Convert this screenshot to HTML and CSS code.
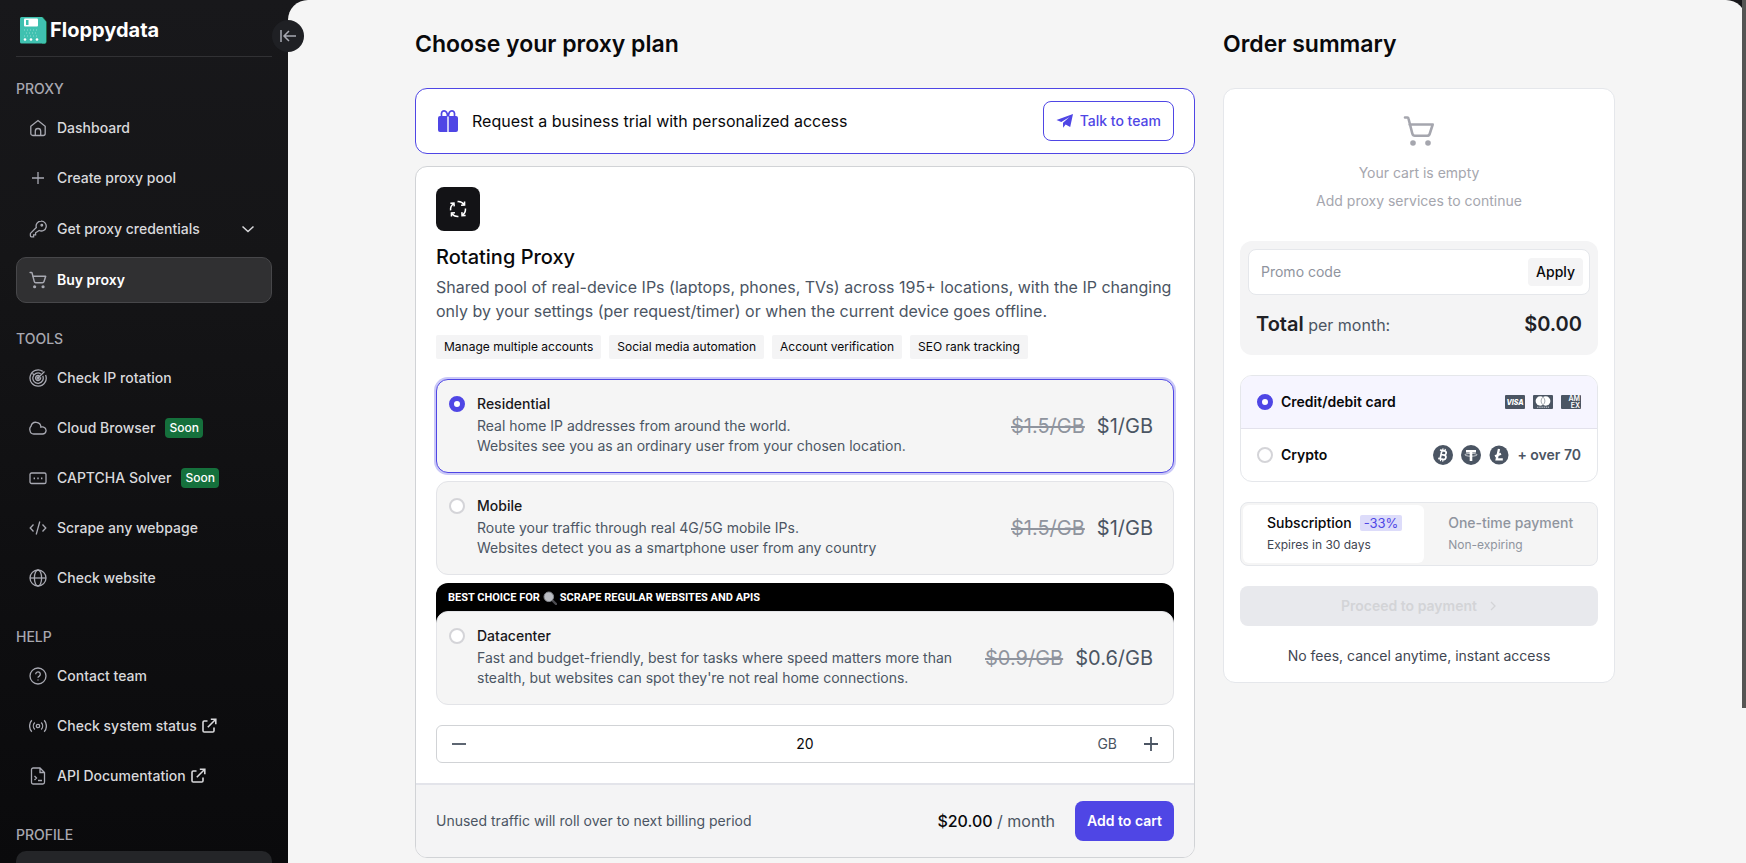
FILE: index.html
```html
<!DOCTYPE html>
<html lang="en">
<head>
  <meta charset="UTF-8" />
  <meta name="viewport" content="width=device-width, initial-scale=1.0" />
  <title>Floppydata - Buy proxy</title>
  <link rel="stylesheet" href="styles.css">
</head>
<body>
  <svg class="sprite" width="0" height="0" aria-hidden="true">
    <symbol id="i-cart" viewBox="0 0 32 32">
      <path d="M2 2.500h2.400c.6 0 .9.3 1 .8L9.300 18.500c.4 1.500 1 2.300 2.600 2.300H24c1.500 0 2.300-.6 2.700-2l3-9.300H6.600" fill="none" stroke="currentColor" stroke-width="2.600" stroke-linejoin="round" stroke-linecap="round"/>
      <circle cx="10" cy="28" r="2.800" fill="currentColor"/><circle cx="25" cy="28" r="2.800" fill="currentColor"/>
    </symbol>
    <symbol id="i-ext" viewBox="0 0 16 16">
      <path d="M6.500 3H3.300C2.600 3 2 3.600 2 4.300v8.400c0 .7.6 1.300 1.300 1.300h8.400c.7 0 1.300-.6 1.300-1.300V9.500M9.800 1.200h5v5M14.500 1.500 6.800 9.200" fill="none" stroke="currentColor" stroke-width="1.600"/>
    </symbol>
  </svg>

  <div class="app">
    <aside class="sidebar">
      <div class="brand">
        <svg class="brand-logo" width="27" height="27" viewBox="0 0 27 27">
          <path d="M22 0h1l4 5v20l-2 2h-3z" fill="#1d6b45"/>
          <path d="M1.500 0H22l4 4.500V25a1.500 1.500 0 0 1-1.500 1.500h-23A1.500 1.500 0 0 1 0 25V1.500A1.500 1.500 0 0 1 1.500 0z" fill="#3fc1b0"/>
          <rect x="4" y="1.500" width="14" height="8" rx="1" fill="#fff"/>
          <rect x="6" y="3" width="2.500" height="5" fill="#3fc1b0"/>
          <path d="M4 13h14M6 16h12M4 19h14" stroke="#8edbd0" stroke-width="1" stroke-dasharray="1 2"/>
          <circle cx="5" cy="22.500" r="1.300" fill="#fff"/><circle cx="11" cy="22.500" r="1.300" fill="#fff"/><circle cx="17" cy="22.500" r="1.300" fill="#fff"/>
        </svg>
        <span>Floppydata</span>
      </div>

      <nav class="nav">
        <section class="nav-group">
          <h3>PROXY</h3>
          <a class="nav-item" href="#">
            <svg class="ic" viewBox="0 0 18 18"><path d="M1.800 7.200 9 1.500l7.200 5.700v7.300a2 2 0 0 1-2 2H3.800a2 2 0 0 1-2-2zM6.300 16.500v-4.300a2.700 2.700 0 0 1 5.400 0v4.300"/></svg>
            Dashboard
          </a>
          <a class="nav-item" href="#">
            <svg class="ic" viewBox="0 0 18 18"><path d="M9 3v12M3 9h12"/></svg>
            Create proxy pool
          </a>
          <button class="nav-item nav-item-menu" type="button">
            <svg class="ic" viewBox="0 0 18 18"><path d="M12 1.200a4.900 4.900 0 0 0-4.700 6.300L1.700 13.100a1 1 0 0 0-.3.700v2c0 .6.400 1 1 1h2.200v-2h2v-2l3.600-2.300A4.900 4.900 0 1 0 12 1.200z"/><circle cx="12.800" cy="5.300" r=".8"/></svg>
            <span>Get proxy credentials</span>
            <svg class="chev" viewBox="0 0 14 14"><path d="m1.500 4.500 5.500 5 5.500-5"/></svg>
          </button>
          <a class="nav-item active" href="#">
            <svg class="ic ic-cart"><use href="#i-cart"/></svg>
            Buy proxy
          </a>
        </section>

        <section class="nav-group">
          <h3>TOOLS</h3>
          <a class="nav-item" href="#">
            <svg class="ic" viewBox="0 0 18 18"><path d="M13.700 2.400A8.100 8.100 0 1 0 16.600 6M3.500 4.500l1.200 1M11.700 4.700a5.200 5.200 0 1 0 2 2.200M10.300 6.800a2.500 2.500 0 1 0 1.200 1.500M9 9l6.500-6.500"/><circle cx="9" cy="9" r="1"/></svg>
            Check IP rotation
          </a>
          <a class="nav-item" href="#">
            <svg class="ic" viewBox="0 0 18 18"><path d="M4.800 15h8.700a3.500 3.500 0 0 0 1.200-6.800c-.8-.4-2-.4-2.800-.1A5 5 0 0 0 2 7.300 4.200 4.200 0 0 0 1 11.500 3.900 3.900 0 0 0 4.800 15z"/></svg>
            Cloud Browser <span class="soon">Soon</span>
          </a>
          <a class="nav-item" href="#">
            <svg class="ic" viewBox="0 0 18 18"><rect x="1" y="4" width="16" height="10.500" rx="1.600"/><path d="M4.600 9.300h1.400M8.300 9.300h1.400M12 9.300h1.400" stroke-width="1.800"/></svg>
            CAPTCHA Solver <span class="soon">Soon</span>
          </a>
          <a class="nav-item" href="#">
            <svg class="ic" viewBox="0 0 18 18"><path d="M4.500 5.500 1.200 9l3.300 3.500M13.500 5.500 16.800 9l-3.300 3.500M10.800 2.500l-3.600 13"/></svg>
            Scrape any webpage
          </a>
          <a class="nav-item" href="#">
            <svg class="ic" viewBox="0 0 18 18"><circle cx="9" cy="9" r="8"/><ellipse cx="9" cy="9" rx="3.600" ry="8"/><path d="M1 9h16"/></svg>
            Check website
          </a>
        </section>

        <section class="nav-group">
          <h3>HELP</h3>
          <a class="nav-item" href="#">
            <svg class="ic" viewBox="0 0 18 18"><circle cx="9" cy="9" r="8"/><path d="M6.700 7.200a2.300 2.300 0 1 1 3.600 1.900C9.500 9.600 9 10 9 10.800M9 12.600v1"/></svg>
            Contact team
          </a>
          <a class="nav-item" href="#">
            <svg class="ic" viewBox="0 0 18 18"><circle cx="9" cy="9" r="1.700"/><path d="M5.800 5.500a5 5 0 0 0 0 7M12.200 5.500a5 5 0 0 1 0 7M2.800 3.300a8.500 8.500 0 0 0 0 11.400M15.200 3.300a8.500 8.500 0 0 1 0 11.400"/></svg>
            <span class="ext">Check system status <svg class="ext-ic"><use href="#i-ext"/></svg></span>
          </a>
          <a class="nav-item" href="#">
            <svg class="ic" viewBox="0 0 18 18"><path d="M11 1H4.200a1.700 1.700 0 0 0-1.700 1.700v12.600A1.700 1.700 0 0 0 4.200 17h9.600a1.700 1.700 0 0 0 1.700-1.700V5.500zM11 1v4.500h4.500M5.500 9l2 2-2 2M9 13.500h4"/></svg>
            <span class="ext">API Documentation <svg class="ext-ic"><use href="#i-ext"/></svg></span>
          </a>
        </section>

        <section class="nav-group">
          <h3>PROFILE</h3>
          <div class="profile-card"></div>
        </section>
      </nav>
    </aside>

    <main class="main">
      <button class="collapse" type="button" aria-label="Collapse sidebar">
        <svg width="18" height="14" viewBox="0 0 18 14"><path d="M2 1v12M17 7H5M10 2 5 7l5 5" fill="none" stroke="currentColor" stroke-width="1.500"/></svg>
      </button>
      <div class="scroll-thumb"></div>

      <div class="content">
        <div class="plans">
          <h1>Choose your proxy plan</h1>

          <div class="trial">
            <svg width="24" height="24" viewBox="0 0 24 24" fill="#4f46e5">
              <path d="M4 7h7.300v16H4a2 2 0 0 1-2-2V9a2 2 0 0 1 2-2zM12.700 7H20a2 2 0 0 1 2 2v12a2 2 0 0 1-2 2h-7.300z"/>
              <path d="M11.500 7.500C11.500 3.500 10 1.800 8 1.800S5 3.500 5.600 7M12.500 7.500c0-4 1.500-5.700 3.500-5.700s3 1.700 2.400 5.200" fill="none" stroke="#4f46e5" stroke-width="1.700"/>
            </svg>
            <p>Request a business trial with personalized access</p>
            <button class="btn-outline" type="button">
              <svg width="18" height="16" viewBox="0 0 18 16" fill="currentColor"><path d="M17 1 .5 7l4.800 1.900L13.500 4 7 9.800l.1 5 2.500-3.200 4.600 2.400z"/></svg>
              Talk to team
            </button>
          </div>

          <div class="plan">
            <div class="plan-body">
              <div class="plan-icon">
                <svg width="18" height="18" viewBox="0 0 20 20" fill="none" stroke="#fff" stroke-width="1.700">
                  <path d="M1.800 11.500c-.4-3 .7-5.800 3.500-7.500M1.500 3.500l4-.2.300 3.800M9.500 1.800c3-.2 5.700 1 7.300 3.500M17.300 1.600v4l-3.900.3M18.300 9.500c.2 3-1 5.800-3.500 7.400M18.500 17.300l-4 .1-.2-3.900M10.500 18.300c-3 .2-5.800-1-7.400-3.500M2.700 18.400v-4l3.900-.2"/>
                </svg>
              </div>
              <h2>Rotating Proxy</h2>
              <p class="plan-desc">Shared pool of real-device IPs (laptops, phones, TVs) across 195+ locations, with the IP changing only by your settings (per request/timer) or when the current device goes offline.</p>
              <ul class="tags">
                <li>Manage multiple accounts</li>
                <li>Social media automation</li>
                <li>Account verification</li>
                <li>SEO rank tracking</li>
              </ul>

              <div class="options">
                <label class="option selected">
                  <input class="radio" type="radio" name="type" checked>
                  <span class="option-text">
                    <span class="option-name">Residential</span>
                    <span class="option-desc">Real home IP addresses from around the world.<br>Websites see you as an ordinary user from your chosen location.</span>
                  </span>
                  <span class="price"><s>$1.5/GB</s><b>$1/GB</b></span>
                </label>
                <label class="option">
                  <input class="radio" type="radio" name="type">
                  <span class="option-text">
                    <span class="option-name">Mobile</span>
                    <span class="option-desc">Route your traffic through real 4G/5G mobile IPs.<br>Websites detect you as a smartphone user from any country</span>
                  </span>
                  <span class="price"><s>$1.5/GB</s><b>$1/GB</b></span>
                </label>
                <div class="best">
                  <div class="best-label">
                    BEST CHOICE FOR
                    <svg width="14" height="14" viewBox="0 0 14 14"><path d="m9 9 4 4" stroke="#4b4b50" stroke-width="2.400" stroke-linecap="round"/><circle cx="5.800" cy="5.800" r="4.800" fill="#b9bcc2" stroke="#83868c" stroke-width="1"/></svg>
                    SCRAPE REGULAR WEBSITES AND APIS
                  </div>
                  <label class="option">
                    <input class="radio" type="radio" name="type">
                    <span class="option-text">
                      <span class="option-name">Datacenter</span>
                      <span class="option-desc">Fast and budget-friendly, best for tasks where speed matters more than stealth, but websites can spot they're not real home connections.</span>
                    </span>
                    <span class="price"><s>$0.9/GB</s><b>$0.6/GB</b></span>
                  </label>
                </div>
              </div>

              <div class="qty">
                <button class="qty-btn" type="button" aria-label="Less">
                  <svg width="14" height="14" viewBox="0 0 14 14"><path d="M0 7h14" stroke="currentColor" stroke-width="1.800"/></svg>
                </button>
                <input type="text" value="20" aria-label="Traffic, GB">
                <div class="qty-end">
                  <span>GB</span>
                  <button class="qty-btn" type="button" aria-label="More">
                    <svg width="14" height="14" viewBox="0 0 14 14"><path d="M0 7h14M7 0v14" stroke="currentColor" stroke-width="1.800"/></svg>
                  </button>
                </div>
              </div>
            </div>

            <div class="plan-foot">
              <p>Unused traffic will roll over to next billing period</p>
              <span class="sum"><b>$20.00</b> / month</span>
              <button class="btn-primary" type="button">Add to cart</button>
            </div>
          </div>
        </div>

        <div class="summary">
          <h1>Order summary</h1>
          <div class="summary-card">
            <div class="empty">
              <svg width="32" height="32"><use href="#i-cart"/></svg>
              <p>Your cart is empty</p>
              <p>Add proxy services to continue</p>
            </div>

            <div class="totals">
              <div class="promo">
                <input type="text" placeholder="Promo code" aria-label="Promo code">
                <button type="button">Apply</button>
              </div>
              <div class="total">
                <span><b>Total</b> per month:</span>
                <b>$0.00</b>
              </div>
            </div>

            <div class="pay">
              <label class="pay-row checked">
                <input class="radio" type="radio" name="pay" checked>
                <span>Credit/debit card</span>
                <span class="pay-icons">
                  <svg width="20" height="14" viewBox="0 0 20 14"><rect width="20" height="14" rx="1" fill="#4b5563"/><text class="visa" x="10" y="10" text-anchor="middle">VISA</text></svg>
                  <svg width="20" height="14" viewBox="0 0 20 14"><rect width="20" height="14" rx="1" fill="#4b5563"/><circle cx="7.300" cy="6" r="4.700" fill="#fff"/><circle cx="12.700" cy="6" r="4.700" fill="#fff"/><path d="M10 2.200a4.700 4.700 0 0 1 0 7.600 4.700 4.700 0 0 1 0-7.600z" fill="#fff" stroke="#4b5563" stroke-width=".5"/><path d="M4 12.200h12" stroke="#cfd3d9" stroke-width="1" stroke-dasharray="1.500 .7"/></svg>
                  <svg width="20" height="14" viewBox="0 0 20 14"><rect width="20" height="14" rx="1" fill="#4b5563"/><text class="amex" text-anchor="end"><tspan x="19" y="6">AM</tspan><tspan x="19" y="13">EX</tspan></text></svg>
                </span>
              </label>
              <label class="pay-row">
                <input class="radio" type="radio" name="pay">
                <span>Crypto</span>
                <span class="pay-icons">
                  <svg width="20" height="20" viewBox="0 0 20 20"><circle cx="10" cy="10" r="10" fill="#4b5563"/><g transform="rotate(12 10 10)" fill="none" stroke="#fff" stroke-width="1.700"><path d="M6 5.700h4.600a2 2 0 0 1 0 4.200H8M8 9.900h3.200a2.200 2.200 0 0 1 0 4.400H6M8 5.700v8.600"/><path d="M8.700 3.500v2M11 3.500v2M8.700 14.500v2M11 14.500v2" stroke-width="1.200"/></g></svg>
                  <svg width="20" height="20" viewBox="0 0 20 20"><circle cx="10" cy="10" r="10" fill="#4b5563"/><path d="M5 5h10v2.400h-3.700v8.600H8.700V7.400H5z" fill="#fff"/><ellipse cx="10" cy="9.800" rx="6" ry="1.400" fill="none" stroke="#fff" stroke-width=".7"/></svg>
                  <svg width="20" height="20" viewBox="0 0 20 20"><circle cx="10" cy="10" r="9.500" fill="#4b5563"/><path d="M10 4 7.700 14.300h6.100M6 11.300l6-2.500" fill="none" stroke="#fff" stroke-width="2.300"/></svg>
                  <span class="more">+ over 70</span>
                </span>
              </label>
            </div>

            <div class="terms">
              <button class="term on" type="button">
                <span class="term-name">Subscription <em>-33%</em></span>
                <small>Expires in 30 days</small>
              </button>
              <button class="term" type="button">
                <span class="term-name">One-time payment</span>
                <small>Non-expiring</small>
              </button>
            </div>

            <button class="proceed" type="button" disabled>
              Proceed to payment
              <svg width="8" height="10" viewBox="0 0 8 10"><path d="m2 1 4 4-4 4" fill="none" stroke="currentColor" stroke-width="1.300"/></svg>
            </button>
            <p class="note">No fees, cancel anytime, instant access</p>
          </div>
        </div>
      </div>
    </main>
  </div>
</body>
</html>
```
FILE: styles.css
```css
* {
  box-sizing: border-box;
}
body {
  font-family: Inter, "Liberation Sans", sans-serif;
  font-size: 14px;
  line-height: 20px;
  color: #09090b;
  background: #18181b;
  margin: 0;
  overflow: hidden;
}
h1, h2, h3, p, ul {
  margin: 0;
  padding: 0;
}
button, input {
  font: inherit;
  color: inherit;
}
button {
  border: none;
  background: none;
  padding: 0;
}
.sprite {
  position: absolute;
}
.app {
  display: flex;
  height: 100vh;
}

/* sidebar */
.sidebar {
  width: 288px;
  flex-shrink: 0;
  padding: 0 16px;
  overflow: hidden;
  background: linear-gradient(#18181b, #151517 30%, #0f0f11 65%, #0a0a0c);
}
.brand {
  display: flex;
  align-items: center;
  gap: 3px;
  height: 57px;
  padding: 4px 4px 0;
  border-bottom: 1px solid #313134;
  color: #fff;
  font-size: 20px;
  font-weight: 700;
}
.nav {
  display: flex;
  flex-direction: column;
  gap: 26px;
  padding-top: 22px;
}
.nav-group {
  display: flex;
  flex-direction: column;
  gap: 4px;
}
.nav-group h3 {
  margin-bottom: 2px;
  font-size: 14px;
  font-weight: 500;
  color: #a8a8b0;
}
.nav-item {
  display: flex;
  align-items: center;
  gap: 10px;
  height: 46px;
  padding: 0 12px;
  border: 1px solid transparent;
  border-radius: 10px;
  color: #d9d9dc;
  font-weight: 500;
  text-decoration: none;
  text-align: left;
}
.nav-item-menu {
  height: 48px;
}
.nav-item-menu span {
  flex: 1;
}
.nav-item.active {
  background: #303032;
  border-color: #47474a;
  color: #fff;
  font-weight: 600;
}
.ic {
  width: 18px;
  height: 18px;
  flex-shrink: 0;
  fill: none;
  stroke: #a8a9b2;
  stroke-width: 1.3;
}
.ic-cart {
  stroke: none;
  color: #a8a9b2;
}
.chev {
  width: 14px;
  height: 14px;
  margin-right: 4px;
  fill: none;
  stroke: #d9d9dc;
  stroke-width: 1.5;
}
.soon {
  padding: 0 4px;
  border-radius: 4px;
  background: #15703c;
  color: #fff;
  font-size: 12px;
}
.ext {
  display: flex;
  align-items: center;
  gap: 4px;
}
.ext-ic {
  width: 16px;
  height: 16px;
}
.profile-card {
  height: 60px;
  border-radius: 10px;
  background: #242528;
}

/* main area */
.main {
  position: relative;
  flex: 1;
  min-width: 0;
  padding: 28px 28px 0 24px;
  border-radius: 20px 20px 0 0;
  background: #f5f5f5;
}
.collapse {
  position: absolute;
  left: -16px;
  top: 20px;
  display: flex;
  align-items: center;
  justify-content: center;
  width: 32px;
  height: 32px;
  border-radius: 50%;
  background: #1f2024;
  color: #a8a9b2;
}
.scroll-thumb {
  position: absolute;
  top: 0;
  right: 0;
  width: 4px;
  height: 82%;
  background: #555553;
}
.content {
  display: grid;
  grid-template-columns: minmax(0, 1fr) 392px;
  gap: 28px;
  max-width: 1200px;
  margin: 0 auto;
}
.content h1 {
  margin-bottom: 28px;
  font-size: 23px;
  line-height: 32px;
  font-weight: 600;
}
.trial {
  display: flex;
  align-items: center;
  gap: 12px;
  padding: 12px 20px;
  margin-bottom: 12px;
  border: 1px solid #4f46e5;
  border-radius: 12px;
  background: #fff;
}
.trial p {
  flex: 1;
  font-size: 16px;
}
.btn-outline {
  display: flex;
  align-items: center;
  gap: 6px;
  height: 40px;
  padding: 0 12px;
  border: 1px solid #4f46e5;
  border-radius: 8px;
  color: #4f46e5;
  font-weight: 500;
}

/* plan card */
.plan {
  border: 1px solid #d1d3d6;
  border-radius: 12px;
  background: #fff;
  overflow: hidden;
}
.plan-body {
  padding: 20px;
}
.plan-icon {
  display: flex;
  align-items: center;
  justify-content: center;
  width: 44px;
  height: 44px;
  border-radius: 8px;
  background: #131316;
}
.plan h2 {
  margin-top: 12px;
  font-size: 20px;
  line-height: 28px;
  font-weight: 500;
}
.plan-desc {
  margin-top: 4px;
  font-size: 16px;
  line-height: 24px;
  color: #4b5563;
}
.tags {
  display: flex;
  gap: 8px;
  margin: 12px 0 20px;
  list-style: none;
}
.tags li {
  padding: 0 8px;
  border-radius: 2px;
  background: #f4f4f5;
  font-size: 12px;
  line-height: 24px;
}
.options {
  display: flex;
  flex-direction: column;
  gap: 8px;
}
.option {
  display: flex;
  gap: 12px;
  padding: 16px 20px 16px 12px;
  border: 1px solid #e3e4e8;
  border-radius: 12px;
  background: #f5f5f5;
}
.option.selected {
  border-color: #4f46e5;
  box-shadow: 0 0 0 2px #cac8f7;
}
.radio {
  appearance: none;
  flex-shrink: 0;
  width: 16px;
  height: 16px;
  margin: 0;
  border: 2px solid #d4d4d8;
  border-radius: 50%;
  background: #fff;
}
.radio:checked {
  border: 5px solid #4f46e5;
}
.option-text {
  display: flex;
  flex-direction: column;
  gap: 4px;
  flex: 1;
  padding-right: 12px;
}
.option-name {
  line-height: 16px;
  font-weight: 500;
  color: #18181b;
}
.option-desc {
  color: #4b5563;
}
.price {
  display: flex;
  align-items: center;
  gap: 12px;
  font-size: 20px;
  color: #4b5563;
}
.price b {
  font-weight: 400;
}
.price s {
  color: #8f949e;
}
.best {
  border-radius: 12px;
  background: linear-gradient(#000 50%, transparent 50%);
}
.best-label {
  display: flex;
  align-items: center;
  gap: 3px;
  height: 28px;
  padding: 2px 12px 0;
  color: #fff;
  font-family: Roboto, Inter, sans-serif;
  font-size: 11px;
  font-weight: 700;
}
.qty {
  display: grid;
  grid-template-columns: 88px 1fr 88px;
  height: 38px;
  margin-top: 20px;
  border: 1px solid #d1d3d6;
  border-radius: 6px;
}
.qty input {
  min-width: 0;
  padding: 0;
  border: none;
  background: none;
  text-align: center;
}
.qty-btn {
  display: flex;
  align-items: center;
  justify-content: center;
  width: 44px;
  color: #4b5563;
}
.qty-end {
  display: flex;
  justify-content: flex-end;
  gap: 12px;
  line-height: 36px;
  color: #4b5563;
}
.plan-foot {
  display: flex;
  align-items: center;
  gap: 20px;
  padding: 16px 20px;
  border-top: 2px solid #e3e4ea;
  background: #f4f4f5;
  color: #4b5563;
}
.plan-foot p {
  flex: 1;
}
.sum {
  font-size: 16px;
}
.sum b {
  font-weight: 500;
  color: #09090b;
}
.btn-primary {
  height: 40px;
  padding: 0 12px;
  border-radius: 8px;
  background: #4f46e5;
  color: #fff;
  font-weight: 600;
}

/* order summary */
.summary-card {
  display: flex;
  flex-direction: column;
  gap: 20px;
  padding: 16px;
  border: 1px solid #e5e7eb;
  border-radius: 12px;
  background: #fff;
}
.empty {
  display: flex;
  flex-direction: column;
  align-items: center;
  gap: 8px;
  padding: 10px 0;
  color: #a5a6ae;
}
.empty svg {
  margin-bottom: 8px;
}
.totals {
  padding: 8px;
  border-radius: 12px;
  background: #f4f4f5;
}
.promo {
  display: flex;
  align-items: center;
  height: 46px;
  padding: 0 6px 0 12px;
  border: 1px solid #e5e7eb;
  border-radius: 8px;
  background: #fff;
}
.promo input {
  flex: 1;
  min-width: 0;
  padding: 0;
  border: none;
}
.promo input::placeholder {
  color: #8f949e;
}
.promo button {
  height: 28px;
  padding: 0 8px;
  border-radius: 4px;
  background: #f4f4f5;
  font-weight: 500;
}
.total {
  display: flex;
  align-items: baseline;
  justify-content: space-between;
  padding: 16px 8px 8px;
  font-size: 16px;
  line-height: 28px;
  color: #4b5563;
}
.total b {
  font-size: 20px;
  line-height: 24px;
  font-weight: 600;
  color: #202126;
}
.pay {
  border: 1px solid #e5e7eb;
  border-radius: 12px;
  overflow: hidden;
}
.pay-row {
  display: flex;
  align-items: center;
  gap: 8px;
  height: 52px;
  padding: 0 16px;
  font-weight: 600;
}
.pay-row.checked {
  height: 53px;
  border-bottom: 1px solid #e3e2ec;
  background: #f6f5ff;
}
.pay-icons {
  display: flex;
  align-items: center;
  gap: 8px;
  margin-left: auto;
}
.more {
  color: #4b5563;
}
.visa {
  fill: #fff;
  font-size: 7px;
  font-weight: 800;
  font-style: italic;
}
.amex {
  fill: #fff;
  font-size: 7px;
  font-weight: 600;
}
.terms {
  display: flex;
  height: 64px;
  padding: 2px;
  border: 1px solid #e5e7eb;
  border-radius: 8px;
  background: #f5f5f5;
}
.term {
  display: flex;
  flex: 1 1 auto;
  flex-direction: column;
  justify-content: center;
  gap: 4px;
  padding: 0 20px 2px 24px;
  border-radius: 6px;
  color: #8f949e;
  font-weight: 500;
  text-align: left;
}
.term small {
  font-size: 12px;
  line-height: 16px;
  font-weight: 400;
}
.term.on {
  background: #fff;
  color: #09090b;
}
.term.on small {
  color: #3f4652;
}
.term-name {
  display: flex;
  align-items: center;
  gap: 8px;
}
.term em {
  padding: 0 4px;
  border-radius: 2px;
  background: #dddcfa;
  color: #4f46e5;
  font-size: 13px;
  line-height: 16px;
  font-style: normal;
  font-weight: 400;
}
.proceed {
  display: flex;
  align-items: center;
  justify-content: center;
  gap: 12px;
  height: 40px;
  border-radius: 8px;
  background: #e8e9ed;
  color: #d3d4d7;
  font-weight: 600;
}
.note {
  text-align: center;
  color: #3f4652;
}
```
